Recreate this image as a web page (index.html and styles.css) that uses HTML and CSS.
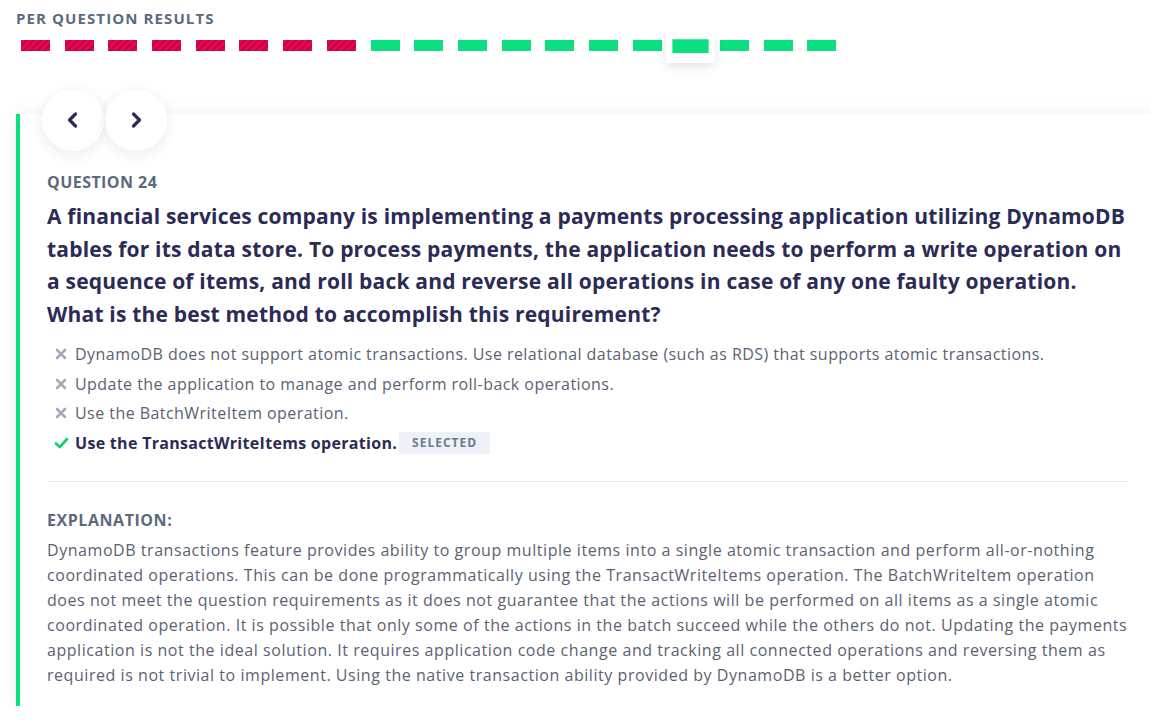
FILE: index.html
```html
<!DOCTYPE html>
<html>
<head>
<meta charset="utf-8">
<link rel="stylesheet" href="styles.css">
</head>
<body>
<div class="page">
  <h2 class="results-title">PER QUESTION RESULTS</h2>
  <div class="bars">
    <div class="bar-item"><span class="bar wrong"></span></div>
    <div class="bar-item"><span class="bar wrong"></span></div>
    <div class="bar-item"><span class="bar wrong"></span></div>
    <div class="bar-item"><span class="bar wrong"></span></div>
    <div class="bar-item"><span class="bar wrong"></span></div>
    <div class="bar-item"><span class="bar wrong"></span></div>
    <div class="bar-item"><span class="bar wrong"></span></div>
    <div class="bar-item"><span class="bar wrong"></span></div>
    <div class="bar-item"><span class="bar right"></span></div>
    <div class="bar-item"><span class="bar right"></span></div>
    <div class="bar-item"><span class="bar right"></span></div>
    <div class="bar-item"><span class="bar right"></span></div>
    <div class="bar-item"><span class="bar right"></span></div>
    <div class="bar-item"><span class="bar right"></span></div>
    <div class="bar-item"><span class="bar right"></span></div>
    <div class="bar-item active"><span class="bar right"></span></div>
    <div class="bar-item"><span class="bar right"></span></div>
    <div class="bar-item"><span class="bar right"></span></div>
    <div class="bar-item"><span class="bar right"></span></div>
  </div>

  <div class="card">
    <div class="nav">
      <button class="nav-btn" aria-label="Previous">
        <svg width="16" height="18" viewBox="0 0 16 18"><path d="M10.5 3 L4.5 9 L10.5 15" fill="none" stroke="#2c2c58" stroke-width="3.2" stroke-linecap="round" stroke-linejoin="round"/></svg>
      </button>
      <button class="nav-btn" aria-label="Next">
        <svg width="16" height="18" viewBox="0 0 16 18"><path d="M5.5 3 L11.5 9 L5.5 15" fill="none" stroke="#2c2c58" stroke-width="3.2" stroke-linecap="round" stroke-linejoin="round"/></svg>
      </button>
    </div>

    <div class="content">
      <div class="q-label">QUESTION 24</div>
      <p class="q-text">A financial services company is implementing a payments processing application utilizing DynamoDB tables for its data store. To process payments, the application needs to perform a write operation on a sequence of items, and roll back and reverse all operations in case of any one faulty operation. What is the best method to accomplish this requirement?</p>

      <ul class="answers">
        <li class="answer">
          <span class="a-icon"><svg width="12" height="12" viewBox="0 0 12 12"><path d="M2 2 L10 10 M10 2 L2 10" stroke="#a3abb6" stroke-width="2.6" stroke-linecap="round"/></svg></span>
          <span class="a-text">DynamoDB does not support atomic transactions. Use relational database (such as RDS) that supports atomic transactions.</span>
        </li>
        <li class="answer">
          <span class="a-icon"><svg width="12" height="12" viewBox="0 0 12 12"><path d="M2 2 L10 10 M10 2 L2 10" stroke="#a3abb6" stroke-width="2.6" stroke-linecap="round"/></svg></span>
          <span class="a-text">Update the application to manage and perform roll-back operations.</span>
        </li>
        <li class="answer">
          <span class="a-icon"><svg width="12" height="12" viewBox="0 0 12 12"><path d="M2 2 L10 10 M10 2 L2 10" stroke="#a3abb6" stroke-width="2.6" stroke-linecap="round"/></svg></span>
          <span class="a-text">Use the BatchWriteItem operation.</span>
        </li>
        <li class="answer correct">
          <span class="a-icon"><svg width="15" height="12" viewBox="0 0 15 12"><path d="M2 6.5 L5.8 10 L13 2" fill="none" stroke="#17d16f" stroke-width="2.8" stroke-linecap="round" stroke-linejoin="round"/></svg></span>
          <span class="a-text">Use the TransactWriteItems operation.</span>
          <span class="badge">SELECTED</span>
        </li>
      </ul>

      <hr class="divider">

      <div class="exp-label">EXPLANATION:</div>
      <p class="exp-text">DynamoDB transactions feature provides ability to group multiple items into a single atomic transaction and perform all-or-nothing coordinated operations. This can be done programmatically using the TransactWriteItems operation. The BatchWriteItem operation does not meet the question requirements as it does not guarantee that the actions will be performed on all items as a single atomic coordinated operation. It is possible that only some of the actions in the batch succeed while the others do not. Updating the payments application is not the ideal solution. It requires application code change and tracking all connected operations and reversing them as required is not trivial to implement. Using the native transaction ability provided by DynamoDB is a better option.</p>
    </div>
  </div>
</div>
</body>
</html>
```

FILE: styles.css
```css
html, body {
  margin: 0;
  padding: 0;
  background: #ffffff;
  overflow: hidden;
}

body {
  font-family: "Open Sans", "Noto Sans", sans-serif;
  color: #5b6272;
}

.page {
  width: 1180px;
  padding: 8px 0 0 16px;
}

.results-title {
  margin: 0;
  font-size: 15px;
  line-height: 20px;
  font-weight: 700;
  letter-spacing: 1.1px;
  color: #5a6b80;
}

.bars {
  display: flex;
  gap: 4.7px;
  margin-top: 8px;
  align-items: flex-start;
}

.bar-item {
  width: 29px;
  padding: 4px 5px 8px;
  background: transparent;
}

.bar-item.active {
  background: #ffffff;
  box-shadow: 0 3px 8px rgba(40, 50, 90, 0.12);
  transform: scale(1.25);
  transform-origin: 50% 30%;
}

.bar {
  display: block;
  height: 11px;
}

.bar.right {
  background: #0bdf80;
}

.bar.wrong {
  background: repeating-linear-gradient(-45deg, #e6054e 0, #e6054e 3px, #c7003f 3px, #c7003f 5px);
}

.card {
  position: relative;
  margin-top: 55px;
  width: 1113px;
  background: #ffffff;
  border-left: 4px solid #0bdf80;
  padding: 58px 0 18px 27px;
  box-shadow: 0 0 22px rgba(30, 40, 80, 0.06);
}

.content {
  width: 1082px;
}

.nav {
  position: absolute;
  top: -25px;
  left: 22px;
  display: flex;
  gap: 1px;
}

.nav-btn {
  width: 62px;
  height: 62px;
  border-radius: 50%;
  border: 0;
  background: #ffffff;
  box-shadow: 0 4px 14px rgba(30, 40, 80, 0.09);
  display: flex;
  align-items: center;
  justify-content: center;
  padding: 0;
}

.q-label {
  font-size: 16px;
  line-height: 20px;
  font-weight: 700;
  letter-spacing: 0.45px;
  color: #5a6b80;
}

.q-text {
  margin: 8px 0 0;
  font-size: 21px;
  line-height: 32.5px;
  font-weight: 700;
  letter-spacing: 0.2px;
  color: #2b2b55;
}

.answers {
  list-style: none;
  margin: 9px 0 0;
  padding: 0;
}

.answer {
  display: flex;
  align-items: center;
  height: 29.7px;
  font-size: 16px;
  letter-spacing: 0.45px;
  color: #5b6272;
}

.a-icon {
  width: 28px;
  display: flex;
  justify-content: center;
  align-items: center;
}

.answer.correct .a-text {
  font-weight: 700;
  letter-spacing: 0.3px;
  color: #2b2b55;
}

.badge {
  margin-left: 2px;
  padding: 0 13px;
  height: 22px;
  line-height: 22px;
  background: #eef2f6;
  font-size: 12px;
  font-weight: 700;
  letter-spacing: 1px;
  color: #6b7a8c;
}

.divider {
  border: 0;
  border-top: 1px solid #e7e9ec;
  margin: 23px 0 0;
}

.exp-label {
  margin-top: 28px;
  font-size: 16px;
  line-height: 20px;
  font-weight: 700;
  letter-spacing: 0.55px;
  color: #5a6b80;
}

.exp-text {
  margin: 8px 0 0;
  font-size: 16px;
  line-height: 25px;
  letter-spacing: 0.55px;
  color: #5b6272;
}
```
